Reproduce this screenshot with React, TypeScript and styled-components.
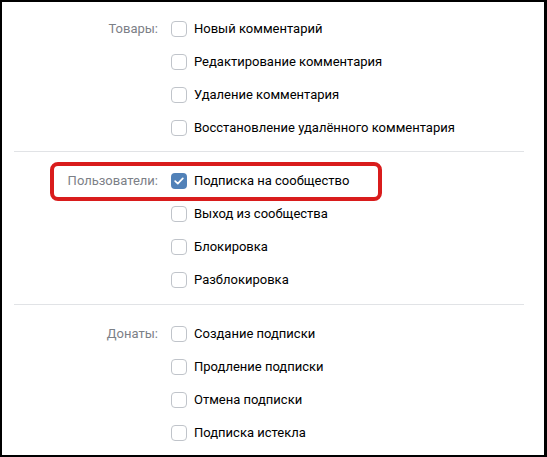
import React from 'react';
import styled, { createGlobalStyle } from 'styled-components';

const GlobalStyle = createGlobalStyle`
  html, body {
    margin: 0;
    padding: 0;
    background: #000;
  }
`;

const Frame = styled.div`
  width: 547px;
  height: 457px;
  box-sizing: border-box;
  border-style: solid;
  border-color: #000;
  border-width: 2px 3px 2px 2px;
  background: #fff;
  overflow: hidden;
  font-family: Roboto, 'Liberation Sans', Arial, sans-serif;
  font-size: 13px;
`;

const Section = styled.section`
  position: relative;
  padding: 12px 0 8px;

  &:first-child {
    padding: 10px 0 7px;
  }
`;

const Divider = styled.hr`
  margin: 0 20px 0 12px;
  border: 0;
  height: 1px;
  background: #e1e3e6;
`;

const Group = styled.div`
  display: grid;
  grid-template-columns: 156px 1fr;
  column-gap: 13px;
`;

const Label = styled.div`
  text-align: right;
  color: #7c8087;
  line-height: 33px;
  height: 33px;
`;

const Options = styled.div`
  display: flex;
  flex-direction: column;
`;

const Option = styled.label`
  display: flex;
  align-items: center;
  gap: 7px;
  height: 33px;
  color: #000;
  white-space: nowrap;
`;

const Box = styled.span<{ $checked?: boolean }>`
  width: 16px;
  height: 16px;
  box-sizing: border-box;
  border-radius: 4px;
  flex: none;
  display: flex;
  align-items: center;
  justify-content: center;
  background: ${({ $checked }) => ($checked ? '#5181b8' : '#fff')};
  border: ${({ $checked }) => ($checked ? 'none' : '1px solid #c0c4ca')};
`;

const Highlight = styled.div`
  position: absolute;
  left: 48px;
  top: 10px;
  width: 332px;
  height: 39px;
  box-sizing: border-box;
  border: 4px solid #d91c1c;
  border-radius: 8px;
  pointer-events: none;
`;

function Checkbox({ checked }: { checked?: boolean }) {
  return (
    <Box $checked={checked}>
      {checked && (
        <svg width="10" height="8" viewBox="0 0 10 8">
          <polyline
            points="1.2,4.2 3.8,6.6 8.8,1.4"
            fill="none"
            stroke="#fff"
            strokeWidth="1.7"
            strokeLinecap="round"
            strokeLinejoin="round"
          />
        </svg>
      )}
    </Box>
  );
}

type Item = { text: string; checked?: boolean };

const groups: { label: string; items: Item[]; marked?: boolean }[] = [
  {
    label: 'Товары:',
    items: [
      { text: 'Новый комментарий' },
      { text: 'Редактирование комментария' },
      { text: 'Удаление комментария' },
      { text: 'Восстановление удалённого комментария' },
    ],
  },
  {
    label: 'Пользователи:',
    marked: true,
    items: [
      { text: 'Подписка на сообщество', checked: true },
      { text: 'Выход из сообщества' },
      { text: 'Блокировка' },
      { text: 'Разблокировка' },
    ],
  },
  {
    label: 'Донаты:',
    items: [
      { text: 'Создание подписки' },
      { text: 'Продление подписки' },
      { text: 'Отмена подписки' },
      { text: 'Подписка истекла' },
    ],
  },
];

export default function App() {
  return (
    <>
      <GlobalStyle />
      <Frame>
        {groups.map((g, i) => (
          <React.Fragment key={g.label}>
            {i > 0 && <Divider />}
            <Section>
              <Group>
                <Label>{g.label}</Label>
                <Options>
                  {g.items.map((it) => (
                    <Option key={it.text}>
                      <Checkbox checked={it.checked} />
                      {it.text}
                    </Option>
                  ))}
                </Options>
              </Group>
              {g.marked && <Highlight />}
            </Section>
          </React.Fragment>
        ))}
      </Frame>
    </>
  );
}
